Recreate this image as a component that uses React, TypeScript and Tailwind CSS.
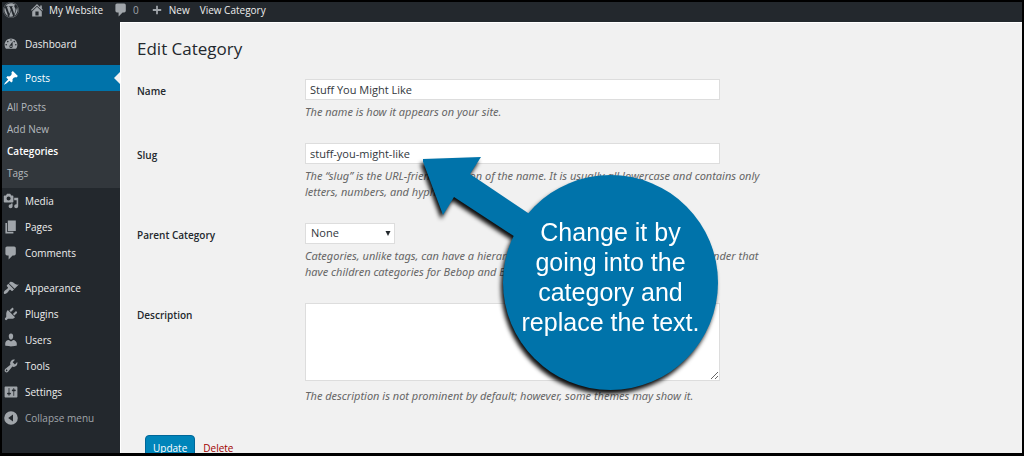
import { clsx } from "clsx";
import type { ReactNode } from "react";
import { FaWordpress } from "react-icons/fa";

const icons = {
  dashboard:
    "M3.76 16h12.48c1.1-1.37 1.76-3.11 1.76-5 0-4.42-3.58-8-8-8s-8 3.58-8 8c0 1.89.66 3.63 1.76 5zM10 4c.55 0 1 .45 1 1s-.45 1-1 1-1-.45-1-1 .45-1 1-1zM6 6c.55 0 1 .45 1 1s-.45 1-1 1-1-.45-1-1 .45-1 1-1zm8 0c.55 0 1 .45 1 1s-.45 1-1 1-1-.45-1-1 .45-1 1-1zm-5.37 5.55L12 7v6c0 1.1-.9 2-2 2s-2-.9-2-2c0-.57.24-1.08.63-1.45zM4 10c.55 0 1 .45 1 1s-.45 1-1 1-1-.45-1-1 .45-1 1-1zm12 0c.55 0 1 .45 1 1s-.45 1-1 1-1-.45-1-1 .45-1 1-1zm-5 3c0-.55-.45-1-1-1s-1 .45-1 1 .45 1 1 1 1-.45 1-1z",
  pin: "M10.44 3.02l1.82-1.82 6.36 6.35-1.83 1.82c-1.05-.68-2.48-.57-3.41.36l-.75.75c-.92.93-1.04 2.35-.35 3.41l-1.83 1.82-2.41-2.41-2.8 2.79c-.42.42-3.38 2.71-3.8 2.29s1.86-3.39 2.28-3.81l2.79-2.79L4.1 9.36l1.83-1.82c1.05.69 2.48.57 3.4-.36l.75-.75c.93-.92 1.05-2.35.36-3.41z",
  media:
    "M13 11V4c0-.55-.45-1-1-1h-1.67L9 1H5L3.67 3H2c-.55 0-1 .45-1 1v7c0 .55.45 1 1 1h10c.55 0 1-.45 1-1zM7 4.5c1.38 0 2.5 1.12 2.5 2.5S8.38 9.5 7 9.5 4.5 8.38 4.5 7 5.62 4.5 7 4.5zM14 6h5v10.5c0 1.38-1.12 2.5-2.5 2.5S14 17.88 14 16.5s1.12-2.5 2.5-2.5c.17 0 .34.02.5.05V9h-3V6zm-4 8.05V13h2v3.5c0 1.38-1.12 2.5-2.5 2.5S7 17.88 7 16.5 8.12 14 9.5 14c.17 0 .34.02.5.05z",
  page: "M6 15V2h10v13H6zm-1 1h8v2H3V5h2v11z",
  comment:
    "M5 2h9c1.1 0 2 .9 2 2v7c0 1.1-.9 2-2 2h-2l-5 5v-5H5c-1.1 0-2-.9-2-2V4c0-1.1.9-2 2-2z",
  appearance:
    "M14.48 11.06L7.41 3.99l1.5-1.5c.5-.56 2.3-.47 3.51.32 1.21.8 1.43 1.28 2.91 2.1 1.18.64 2.45 1.26 4.45.85zm-.71.71L6.7 4.7 4.93 6.47c-.39.39-.39 1.02 0 1.41l1.06 1.06c.39.39.39 1.03 0 1.42-.6.6-1.43 1.11-2.21 1.69-.35.26-.7.53-1.01.84C1.43 14.23.4 16.08 1.4 17.07c.99 1 2.84-.03 4.18-1.36.31-.31.58-.66.85-1.02.57-.78 1.08-1.61 1.69-2.21.39-.39 1.02-.39 1.41 0l1.06 1.06c.39.39 1.02.39 1.41 0z",
  plugin:
    "M13.11 4.36L9.87 7.6 8 5.73l3.24-3.24c.35-.34 1.05-.2 1.56.32.52.51.66 1.21.31 1.55zm-8 1.77l.91-1.12 9.01 9.01-1.19.84c-.71.71-2.63 1.16-3.82 1.16H6.14L4.9 17.26c-.59.59-1.54.59-2.12 0-.59-.58-.59-1.53 0-2.12l1.24-1.24v-3.88c0-1.13.4-3.19 1.09-3.89zm7.26 3.97l3.24-3.24c.34-.35 1.04-.21 1.55.31.52.51.66 1.21.31 1.55l-3.24 3.25z",
  users:
    "M10 9.25c-2.27 0-2.73-3.44-2.73-3.44C7 4.02 7.82 2 9.97 2c2.16 0 2.98 2.02 2.71 3.81 0 0-.41 3.44-2.68 3.44zm0 2.57L12.72 10c2.39 0 4.52 2.33 4.52 4.53v2.49s-3.65 1.13-7.24 1.13c-3.65 0-7.24-1.13-7.24-1.13v-2.49c0-2.25 1.94-4.48 4.47-4.48z",
  tools:
    "M16.68 9.77c-1.34 1.34-3.3 1.67-4.95.99l-5.41 6.52c-.99.99-2.59.99-3.58 0s-.99-2.59 0-3.57l6.52-5.42c-.68-1.65-.35-3.61.99-4.95 1.28-1.28 3.12-1.62 4.72-1.06l-2.89 2.89 2.82 2.82 2.86-2.87c.53 1.58.18 3.39-1.08 4.65zM3.81 16.21c.4.39 1.04.39 1.43 0 .4-.4.4-1.04 0-1.43-.39-.4-1.03-.4-1.43 0-.39.39-.39 1.03 0 1.43z",
  settings:
    "M18 16V4c0-.55-.45-1-1-1H3c-.55 0-1 .45-1 1v12c0 .55.45 1 1 1h14c.55 0 1-.45 1-1zM8 11h1c.55 0 1 .45 1 1s-.45 1-1 1H8v1.5c0 .28-.22.5-.5.5s-.5-.22-.5-.5V13H6c-.55 0-1-.45-1-1s.45-1 1-1h1V5.5c0-.28.22-.5.5-.5s.5.22.5.5V11zm5-2h-1c-.55 0-1-.45-1-1s.45-1 1-1h1V5.5c0-.28.22-.5.5-.5s.5.22.5.5V7h1c.55 0 1 .45 1 1s-.45 1-1 1h-1v5.5c0 .28-.22.5-.5.5s-.5-.22-.5-.5V9z",
  collapse:
    "M10 1.5a8.5 8.5 0 1 1 0 17 8.5 8.5 0 0 1 0-17zM12.5 5.5L6.5 10l6 4.5z",
  home: "M16 8.5l1.53 1.53-1.06 1.06L10 4.6l-6.47 6.49-1.06-1.06L10 2.5l4 4v-2h2v4zm-6-2.46l6 5.99V18H4v-5.97zM12 17v-5H8v5h4z",
  plus: "M17 8.5v3h-5.5V17h-3v-5.5H3v-3h5.5V3h3v5.5z",
};

type IconName = keyof typeof icons;

function Icon({ name, className }: { name: IconName; className?: string }) {
  return (
    <svg
      viewBox="0 0 20 20"
      fill="currentColor"
      fillRule="evenodd"
      aria-hidden="true"
      className={clsx("size-4 shrink-0", className)}
    >
      <path d={icons[name]} />
    </svg>
  );
}

const submenu = ["All Posts", "Add New", "Categories", "Tags"];

const contentMenu: { label: string; icon: IconName }[] = [
  { label: "Media", icon: "media" },
  { label: "Pages", icon: "page" },
  { label: "Comments", icon: "comment" },
];

const siteMenu: { label: string; icon: IconName }[] = [
  { label: "Appearance", icon: "appearance" },
  { label: "Plugins", icon: "plugin" },
  { label: "Users", icon: "users" },
  { label: "Tools", icon: "tools" },
  { label: "Settings", icon: "settings" },
];

function MenuLink({ label, icon, active }: { label: string; icon: IconName; active?: boolean }) {
  return (
    <li>
      <a
        href="#"
        className={clsx(
          "relative flex h-[26px] items-center gap-1.5 pl-px font-medium",
          active ? "bg-[#0073aa] text-white" : "text-[#eeeeee]",
        )}
      >
        <Icon name={icon} className={active ? "text-white" : "text-[#a0a5aa]"} />
        {label}
        {active && (
          <span className="absolute right-0 border-y-6 border-r-6 border-y-transparent border-r-[#f1f1f1]" />
        )}
      </a>
    </li>
  );
}

function AdminBar() {
  return (
    <header className="flex h-5 shrink-0 items-center bg-[#23282d] pb-1 pl-px text-[10px] font-medium text-[#eeeeee]">
      <a href="#" aria-label="About WordPress">
        <FaWordpress className="size-4 text-[#a0a5aa]" />
      </a>
      <a href="#" className="ml-2.5 flex items-center gap-1">
        <Icon name="home" className="text-[#a0a5aa]" />
        My Website
      </a>
      <a href="#" className="ml-2.5 flex items-center gap-1 text-[#a0a5aa]">
        <Icon name="comment" />0
      </a>
      <a href="#" className="ml-2.5 flex items-center gap-1">
        <Icon name="plus" className="p-0.5 text-[#a0a5aa]" />
        New
      </a>
      <a href="#" className="ml-2.5">
        View Category
      </a>
    </header>
  );
}

function Sidebar() {
  return (
    <nav className="w-[118px] shrink-0 bg-[#23282d] pt-[9px] text-[10px]">
      <ul>
        <MenuLink label="Dashboard" icon="dashboard" />
      </ul>
      <ul className="mt-2">
        <MenuLink label="Posts" icon="pin" active />
        <li>
          <ul className="bg-[#32373c] pt-[5px] pb-1 pl-[5px]">
            {submenu.map((item) => (
              <li key={item}>
                <a
                  href="#"
                  className={clsx(
                    "block leading-[22px]",
                    item === "Categories" ? "font-semibold text-white" : "text-[#b4b9be]",
                  )}
                >
                  {item}
                </a>
              </li>
            ))}
          </ul>
        </li>
        {contentMenu.map((item) => (
          <MenuLink key={item.label} {...item} />
        ))}
      </ul>
      <ul className="mt-[9px]">
        {siteMenu.map((item) => (
          <MenuLink key={item.label} {...item} />
        ))}
      </ul>
      <button type="button" className="flex h-[26px] items-center gap-1.5 pl-px text-[#a0a5aa]">
        <Icon name="collapse" />
        Collapse menu
      </button>
    </nav>
  );
}

function Field({
  id,
  label,
  help,
  children,
}: {
  id: string;
  label: string;
  help: ReactNode;
  children: ReactNode;
}) {
  return (
    <div className="grid grid-cols-[168px_1fr]">
      <label htmlFor={id} className="pt-1 text-[10px] leading-4 font-semibold text-[#23282d]">
        {label}
      </label>
      <div className="flex flex-col items-start gap-1">
        {children}
        <p className="font-['Noto_Sans','Open_Sans',sans-serif] leading-4 text-[#666666] italic">
          {help}
        </p>
      </div>
    </div>
  );
}

const inputClass =
  "h-[21px] w-full max-w-[415px] border border-[#dddddd] bg-white px-1 text-[#32373c] outline-none";

function Callout() {
  return (
    <div className="absolute top-[132px] left-[302px] pt-5 pl-20 drop-shadow-[-2px_4px_2px_rgba(0,0,0,0.95)]">
      <svg
        viewBox="0 0 120 90"
        aria-hidden="true"
        className="absolute top-0 left-0 w-[120px] fill-[#0073aa]"
      >
        <path d="M-1 4 58 2 47 19 120 68 100 87 31 42 20 60z" />
      </svg>
      <p className="relative flex size-[215px] items-center justify-center rounded-full bg-[#0073aa] pb-3 text-center font-['Liberation_Sans',Arial,sans-serif] text-[25px] leading-[30px] text-white">
        Change it by
        <br />
        going into the
        <br />
        category and
        <br />
        replace the text.
      </p>
    </div>
  );
}

export default function App() {
  return (
    <div className="flex h-screen flex-col overflow-hidden border-2 border-b-3 border-black bg-[#f1f1f1] font-['Open_Sans','Noto_Sans',sans-serif] text-[11px]">
      <AdminBar />
      <div className="flex min-h-0 flex-1">
        <Sidebar />
        <main className="relative flex-1 border-t border-l border-white pl-4">
          <h1 className="pt-3 text-[17px] leading-7 text-[#23282d]">Edit Category</h1>
          <form className="mt-4 flex flex-col gap-[23px]">
            <Field id="name" label="Name" help="The name is how it appears on your site.">
              <input id="name" type="text" defaultValue="Stuff You Might Like" className={inputClass} />
            </Field>
            <Field
              id="slug"
              label="Slug"
              help={
                <>
                  The “slug” is the URL-friendly version of the name. It is usually all lowercase and contains only
                  <br />
                  letters, numbers, and hyphens.
                </>
              }
            >
              <input id="slug" type="text" defaultValue="stuff-you-might-like" className={inputClass} />
            </Field>
            <Field
              id="parent"
              label="Parent Category"
              help={
                <>
                  Categories, unlike tags, can have a hierarchy. You might have a Jazz category, and under that
                  <br />
                  have children categories for Bebop and Big Band. Totally optional.
                </>
              }
            >
              <div className="relative flex items-center">
                <select
                  id="parent"
                  className="h-[21px] w-[90px] appearance-none border border-[#dddddd] bg-white px-[5px] text-[#32373c] outline-none"
                >
                  <option>None</option>
                </select>
                <svg
                  viewBox="0 0 6 5"
                  aria-hidden="true"
                  className="pointer-events-none absolute right-1 w-1.5 fill-[#23282d]"
                >
                  <path d="M.5 0h5L3 5z" />
                </svg>
              </div>
            </Field>
            <Field
              id="description"
              label="Description"
              help="The description is not prominent by default; however, some themes may show it."
            >
              <textarea
                id="description"
                className="mb-[3px] h-[78px] w-full max-w-[415px] border border-[#dddddd] bg-white p-1 text-[#32373c] outline-none"
              />
            </Field>
            <div className="mt-2 flex items-center gap-2 pl-2 text-[10px]">
              <button
                type="submit"
                className="h-[26px] rounded-sm border border-[#006799] bg-[#0085ba] px-[7px] font-medium text-white"
              >
                Update
              </button>
              <a href="#" className="text-[#a00000]">
                Delete
              </a>
            </div>
          </form>
          <Callout />
        </main>
      </div>
    </div>
  );
}
